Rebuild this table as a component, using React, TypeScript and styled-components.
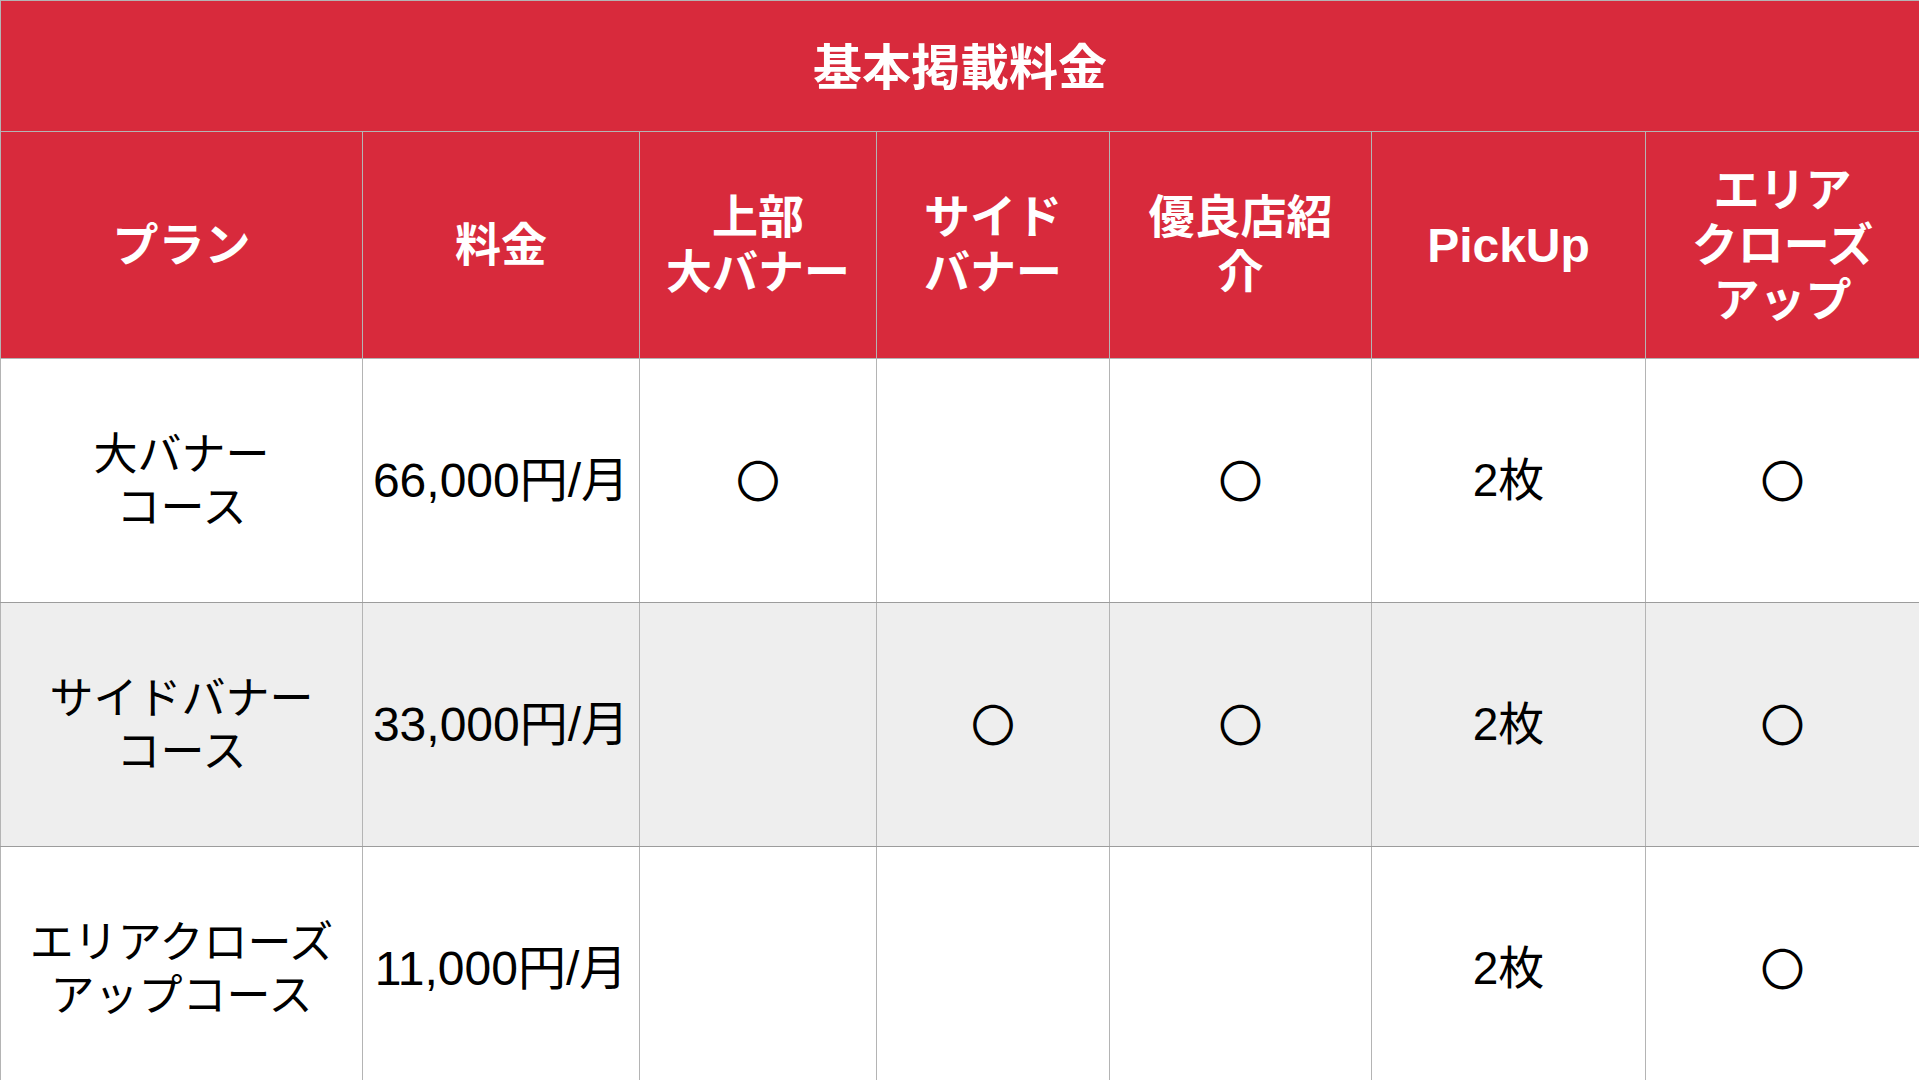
import styled, { createGlobalStyle } from 'styled-components';

const GlobalStyle = createGlobalStyle`
  html, body {
    margin: 0;
    padding: 0;
    background: #ffffff;
  }
  body {
    font-family: "Liberation Sans", "Noto Sans CJK JP", sans-serif;
    overflow: hidden;
  }
`;

const columnWidths = [362, 277, 237, 233, 262, 274, 274];

const StyledPage = styled.div`
  width: 1919px;
  height: 1080px;
  overflow: hidden;
`;

const StyledTable = styled.table`
  width: 1919px;
  border-collapse: collapse;
  table-layout: fixed;
`;

const StyledTitleCell = styled.th`
  height: 131px;
  padding: 0 0 6px;
  box-sizing: border-box;
  background: #d82a3c;
  color: #ffffff;
  font-size: 49px;
  font-weight: 700;
  text-align: center;
  vertical-align: middle;
  border: 1px solid #b4b4b4;
`;

const StyledHeadCell = styled.th<{ $latin?: boolean }>`
  height: 226px;
  padding: 0;
  background: #d82a3c;
  color: #ffffff;
  font-size: ${({ $latin }) => ($latin ? '48px' : '46px')};
  font-weight: 700;
  line-height: 55px;
  text-align: center;
  vertical-align: middle;
  border: 1px solid #b4b4b4;
`;

const StyledRow = styled.tr<{ $shaded: boolean }>`
  background: ${({ $shaded }) => ($shaded ? '#eeeeee' : '#ffffff')};
`;

const StyledCell = styled.td<{ $size?: number }>`
  height: 243px;
  padding: 0;
  color: #000000;
  font-size: ${({ $size }) => $size ?? 46}px;
  line-height: 53px;
  text-align: center;
  vertical-align: middle;
  white-space: nowrap;
  border-left: 1px solid #b4b4b4;
  border-right: 1px solid #b4b4b4;
  border-top: 1px solid #9c9c9c;
  border-bottom: 1px solid #9c9c9c;
`;

const StyledLine = styled.span`
  display: block;
  white-space: nowrap;
`;

const StyledPlanName = styled.span`
  display: block;
  white-space: nowrap;
  font-size: 44px;
`;

const StyledMark = styled.span`
  font-family: "Noto Sans CJK JP", sans-serif;
  font-size: 44px;
  font-weight: 400;
`;

type planType = {
  name: string[];
  price: string;
  topBanner: boolean;
  sideBanner: boolean;
  goodShop: boolean;
  pickUp: string;
  areaCloseUp: boolean;
};

const headers = [
  ['プラン'],
  ['料金'],
  ['上部', '大バナー'],
  ['サイド', 'バナー'],
  ['優良店紹', '介'],
  ['PickUp'],
  ['エリア', 'クローズ', 'アップ'],
];

const plans: planType[] = [
  {
    name: ['大バナー', 'コース'],
    price: '66,000円/月',
    topBanner: true,
    sideBanner: false,
    goodShop: true,
    pickUp: '2枚',
    areaCloseUp: true,
  },
  {
    name: ['サイドバナー', 'コース'],
    price: '33,000円/月',
    topBanner: false,
    sideBanner: true,
    goodShop: true,
    pickUp: '2枚',
    areaCloseUp: true,
  },
  {
    name: ['エリアクローズ', 'アップコース'],
    price: '11,000円/月',
    topBanner: false,
    sideBanner: false,
    goodShop: false,
    pickUp: '2枚',
    areaCloseUp: true,
  },
];

const mark = (on: boolean) => (on ? <StyledMark>〇</StyledMark> : null);

function App() {
  return (
    <StyledPage>
      <GlobalStyle />
      <StyledTable>
        <colgroup>
          {columnWidths.map((w, i) => (
            <col key={i} style={{ width: w }} />
          ))}
        </colgroup>
        <thead>
          <tr>
            <StyledTitleCell colSpan={7}>基本掲載料金</StyledTitleCell>
          </tr>
          <tr>
            {headers.map((lines) => (
              <StyledHeadCell key={lines.join('')} $latin={lines[0] === 'PickUp'}>
                {lines.map((line) => (
                  <StyledLine key={line}>{line}</StyledLine>
                ))}
              </StyledHeadCell>
            ))}
          </tr>
        </thead>
        <tbody>
          {plans.map((plan, index) => (
            <StyledRow key={plan.price} $shaded={index % 2 === 1}>
              <StyledCell>
                {plan.name.map((line) => (
                  <StyledPlanName key={line}>{line}</StyledPlanName>
                ))}
              </StyledCell>
              <StyledCell $size={48}>{plan.price}</StyledCell>
              <StyledCell>{mark(plan.topBanner)}</StyledCell>
              <StyledCell>{mark(plan.sideBanner)}</StyledCell>
              <StyledCell>{mark(plan.goodShop)}</StyledCell>
              <StyledCell>{plan.pickUp}</StyledCell>
              <StyledCell>{mark(plan.areaCloseUp)}</StyledCell>
            </StyledRow>
          ))}
        </tbody>
      </StyledTable>
    </StyledPage>
  );
}

export default App;
